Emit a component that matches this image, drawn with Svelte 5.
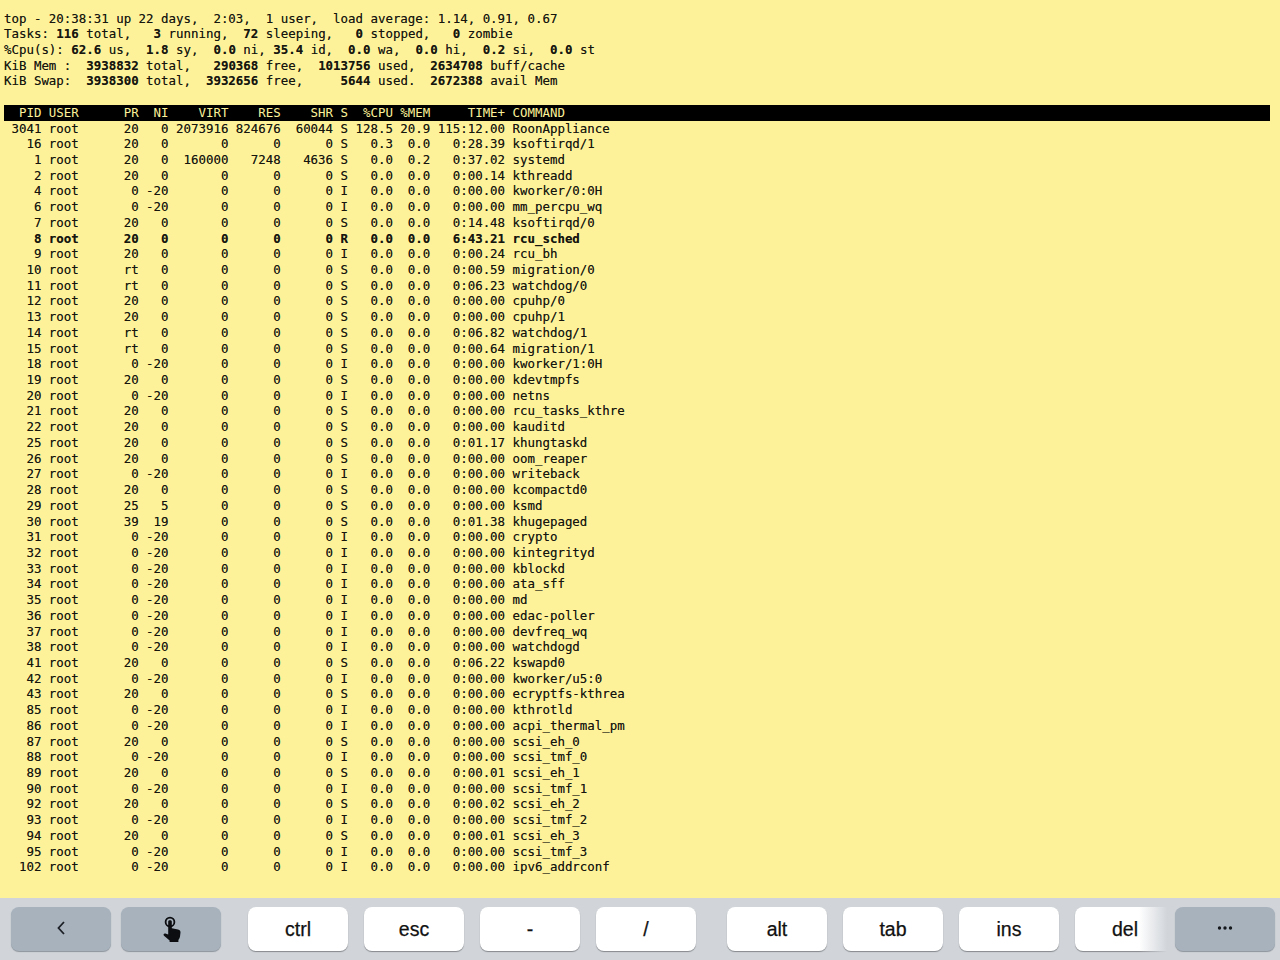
<script>
	// zwischen * und * steht fett gesetzter Text
	const summary = [
		'top - 20:38:31 up 22 days,  2:03,  1 user,  load average: 1.14, 0.91, 0.67',
		'Tasks: *116* total,   *3* running,  *72* sleeping,   *0* stopped,   *0* zombie',
		'%Cpu(s): *62.6* us,  *1.8* sy,  *0.0* ni, *35.4* id,  *0.0* wa,  *0.0* hi,  *0.2* si,  *0.0* st',
		'KiB Mem :  *3938832* total,   *290368* free,  *1013756* used,  *2634708* buff/cache',
		'KiB Swap:  *3938300* total,  *3932656* free,     *5644* used.  *2672388* avail Mem'
	];

	const header = '  PID USER      PR  NI    VIRT    RES    SHR S  %CPU %MEM     TIME+ COMMAND';

	const procs = [
		[3041, '20', '0', '2073916', '824676', '60044', 'S', '128.5', '20.9', '115:12.00', 'RoonAppliance'],
		[16, '20', '0', '0', '0', '0', 'S', '0.3', '0.0', '0:28.39', 'ksoftirqd/1'],
		[1, '20', '0', '160000', '7248', '4636', 'S', '0.0', '0.2', '0:37.02', 'systemd'],
		[2, '20', '0', '0', '0', '0', 'S', '0.0', '0.0', '0:00.14', 'kthreadd'],
		[4, '0', '-20', '0', '0', '0', 'I', '0.0', '0.0', '0:00.00', 'kworker/0:0H'],
		[6, '0', '-20', '0', '0', '0', 'I', '0.0', '0.0', '0:00.00', 'mm_percpu_wq'],
		[7, '20', '0', '0', '0', '0', 'S', '0.0', '0.0', '0:14.48', 'ksoftirqd/0'],
		[8, '20', '0', '0', '0', '0', 'R', '0.0', '0.0', '6:43.21', 'rcu_sched'],
		[9, '20', '0', '0', '0', '0', 'I', '0.0', '0.0', '0:00.24', 'rcu_bh'],
		[10, 'rt', '0', '0', '0', '0', 'S', '0.0', '0.0', '0:00.59', 'migration/0'],
		[11, 'rt', '0', '0', '0', '0', 'S', '0.0', '0.0', '0:06.23', 'watchdog/0'],
		[12, '20', '0', '0', '0', '0', 'S', '0.0', '0.0', '0:00.00', 'cpuhp/0'],
		[13, '20', '0', '0', '0', '0', 'S', '0.0', '0.0', '0:00.00', 'cpuhp/1'],
		[14, 'rt', '0', '0', '0', '0', 'S', '0.0', '0.0', '0:06.82', 'watchdog/1'],
		[15, 'rt', '0', '0', '0', '0', 'S', '0.0', '0.0', '0:00.64', 'migration/1'],
		[18, '0', '-20', '0', '0', '0', 'I', '0.0', '0.0', '0:00.00', 'kworker/1:0H'],
		[19, '20', '0', '0', '0', '0', 'S', '0.0', '0.0', '0:00.00', 'kdevtmpfs'],
		[20, '0', '-20', '0', '0', '0', 'I', '0.0', '0.0', '0:00.00', 'netns'],
		[21, '20', '0', '0', '0', '0', 'S', '0.0', '0.0', '0:00.00', 'rcu_tasks_kthre'],
		[22, '20', '0', '0', '0', '0', 'S', '0.0', '0.0', '0:00.00', 'kauditd'],
		[25, '20', '0', '0', '0', '0', 'S', '0.0', '0.0', '0:01.17', 'khungtaskd'],
		[26, '20', '0', '0', '0', '0', 'S', '0.0', '0.0', '0:00.00', 'oom_reaper'],
		[27, '0', '-20', '0', '0', '0', 'I', '0.0', '0.0', '0:00.00', 'writeback'],
		[28, '20', '0', '0', '0', '0', 'S', '0.0', '0.0', '0:00.00', 'kcompactd0'],
		[29, '25', '5', '0', '0', '0', 'S', '0.0', '0.0', '0:00.00', 'ksmd'],
		[30, '39', '19', '0', '0', '0', 'S', '0.0', '0.0', '0:01.38', 'khugepaged'],
		[31, '0', '-20', '0', '0', '0', 'I', '0.0', '0.0', '0:00.00', 'crypto'],
		[32, '0', '-20', '0', '0', '0', 'I', '0.0', '0.0', '0:00.00', 'kintegrityd'],
		[33, '0', '-20', '0', '0', '0', 'I', '0.0', '0.0', '0:00.00', 'kblockd'],
		[34, '0', '-20', '0', '0', '0', 'I', '0.0', '0.0', '0:00.00', 'ata_sff'],
		[35, '0', '-20', '0', '0', '0', 'I', '0.0', '0.0', '0:00.00', 'md'],
		[36, '0', '-20', '0', '0', '0', 'I', '0.0', '0.0', '0:00.00', 'edac-poller'],
		[37, '0', '-20', '0', '0', '0', 'I', '0.0', '0.0', '0:00.00', 'devfreq_wq'],
		[38, '0', '-20', '0', '0', '0', 'I', '0.0', '0.0', '0:00.00', 'watchdogd'],
		[41, '20', '0', '0', '0', '0', 'S', '0.0', '0.0', '0:06.22', 'kswapd0'],
		[42, '0', '-20', '0', '0', '0', 'I', '0.0', '0.0', '0:00.00', 'kworker/u5:0'],
		[43, '20', '0', '0', '0', '0', 'S', '0.0', '0.0', '0:00.00', 'ecryptfs-kthrea'],
		[85, '0', '-20', '0', '0', '0', 'I', '0.0', '0.0', '0:00.00', 'kthrotld'],
		[86, '0', '-20', '0', '0', '0', 'I', '0.0', '0.0', '0:00.00', 'acpi_thermal_pm'],
		[87, '20', '0', '0', '0', '0', 'S', '0.0', '0.0', '0:00.00', 'scsi_eh_0'],
		[88, '0', '-20', '0', '0', '0', 'I', '0.0', '0.0', '0:00.00', 'scsi_tmf_0'],
		[89, '20', '0', '0', '0', '0', 'S', '0.0', '0.0', '0:00.01', 'scsi_eh_1'],
		[90, '0', '-20', '0', '0', '0', 'I', '0.0', '0.0', '0:00.00', 'scsi_tmf_1'],
		[92, '20', '0', '0', '0', '0', 'S', '0.0', '0.0', '0:00.02', 'scsi_eh_2'],
		[93, '0', '-20', '0', '0', '0', 'I', '0.0', '0.0', '0:00.00', 'scsi_tmf_2'],
		[94, '20', '0', '0', '0', '0', 'S', '0.0', '0.0', '0:00.01', 'scsi_eh_3'],
		[95, '0', '-20', '0', '0', '0', 'I', '0.0', '0.0', '0:00.00', 'scsi_tmf_3'],
		[102, '0', '-20', '0', '0', '0', 'I', '0.0', '0.0', '0:00.00', 'ipv6_addrconf']
	];

	function formatRow(p) {
		const [pid, pr, ni, virt, res, shr, s, cpu, mem, time, cmd] = p;
		return (
			String(pid).padStart(5) +
			' root      ' +
			pr.padStart(2) +
			' ' +
			ni.padStart(3) +
			' ' +
			virt.padStart(7) +
			' ' +
			res.padStart(6) +
			' ' +
			shr.padStart(6) +
			' ' +
			s +
			' ' +
			cpu.padStart(5) +
			' ' +
			mem.padStart(4) +
			' ' +
			time.padStart(9) +
			' ' +
			cmd
		);
	}

	const keyGroups = [
		{ cls: 'g-nav', keys: [{ id: 'back', dark: true }, { id: 'touch', dark: true }] },
		{ cls: 'g-a', keys: [{ label: 'ctrl' }, { label: 'esc' }, { label: '-' }, { label: '/' }] },
		{ cls: 'g-b', keys: [{ label: 'alt' }, { label: 'tab' }, { label: 'ins' }, { label: 'del', fade: true }] }
	];
</script>

<div class="screen">
	<main class="term">
		{#each summary as line}
			<div class="line">{#each line.split('*') as part, i}{#if i % 2}<b>{part}</b>{:else}{part}{/if}{/each}</div>
		{/each}
		<div class="line"></div>
		<div class="line head">{header}</div>
		{#each procs as p}
			<div class="line" class:bold={p[0] === 8}>{formatRow(p)}</div>
		{/each}
	</main>

	<nav class="keys">
		{#each keyGroups as group}
			<div class="group {group.cls}">
				{#each group.keys as key}
					<button class="key" class:dark={key.dark} class:fade={key.fade}>
						{#if key.id === 'back'}
							<svg class="chevron" width="10" height="16" viewBox="0 0 10 16">
								<path d="M8 2 L2.5 8 L8 14" fill="none" stroke="#1c2026" stroke-width="1.8" />
							</svg>
						{:else if key.id === 'touch'}
							<svg width="20" height="26" viewBox="0 0 20 26">
								<circle cx="9" cy="6" r="4.4" fill="none" stroke="#0b0d10" stroke-width="1.8" />
								<path
									fill="#0b0d10"
									d="M7.2 5.4 C7.2 3.9 10.8 3.9 10.8 5.4 V12.2 L17 13.6 C18.8 14 19.6 15 19.5 16.6 L19 20.5 C18.8 22 18 23.2 17.4 24 V26 H8.6 V24.6 L3 19.8 C2 18.8 2.8 17.2 4.4 17.6 L7.2 18.6 Z"
								/>
							</svg>
						{:else}
							{key.label}
						{/if}
					</button>
				{/each}
			</div>
		{/each}
		<button class="key dark more" aria-label="more">
			<svg class="dots" width="16" height="4" viewBox="0 0 16 4">
				<circle cx="2.5" cy="2" r="1.7" fill="#14171b" />
				<circle cx="8" cy="2" r="1.7" fill="#14171b" />
				<circle cx="13.5" cy="2" r="1.7" fill="#14171b" />
			</svg>
		</button>
	</nav>
</div>

<style>
	:global(body) {
		margin: 0;
	}
	.screen {
		width: 1280px;
		height: 960px;
		display: flex;
		flex-direction: column;
		overflow: hidden;
	}
	.term {
		flex: 1;
		background: #fdf29a;
		color: #16160f;
		padding: 10.5px 10px 0 4px;
		font-family: 'DejaVu Sans Mono', monospace;
		font-size: 12.43px;
		text-shadow: 0 0 0.5px rgba(22, 22, 15, 0.55);
		overflow: hidden;
	}
	.line {
		height: 15.72px;
		line-height: 15.72px;
		white-space: pre;
	}
	.head {
		background: #000;
		color: #fdf29a;
		text-shadow: none;
	}
	.line b,
	.bold {
		font-weight: 700;
	}
	.keys {
		height: 62px;
		flex: none;
		box-sizing: border-box;
		background: #d1d5da;
		padding: 9px 5px 0 11px;
		display: flex;
		align-items: flex-start;
	}
	.group {
		display: flex;
		gap: 16px;
	}
	.g-nav {
		gap: 10px;
	}
	.g-a {
		margin-left: 27px;
	}
	.g-b {
		margin-left: 31px;
	}
	.key {
		position: relative;
		width: 100px;
		height: 44px;
		padding: 0;
		border: none;
		border-radius: 8px;
		background: #fff;
		box-shadow: 0 1px 1px #85888c;
		color: #111;
		font-family: 'Liberation Sans', Arial, sans-serif;
		font-size: 19.5px;
		-webkit-text-stroke: 0.25px #111;
		display: flex;
		align-items: center;
		justify-content: center;
	}
	.key.dark {
		background: #a8b2bd;
		box-shadow: 0 1px 1px #8d949c;
	}
	.chevron {
		margin-top: -2px;
	}
	.dots {
		margin-top: -2px;
	}
	.fade::after {
		content: '';
		position: absolute;
		top: -2px;
		right: 0;
		bottom: -3px;
		width: 36px;
		background: linear-gradient(to right, rgba(209, 213, 218, 0), #d1d5da 78%);
	}
</style>
